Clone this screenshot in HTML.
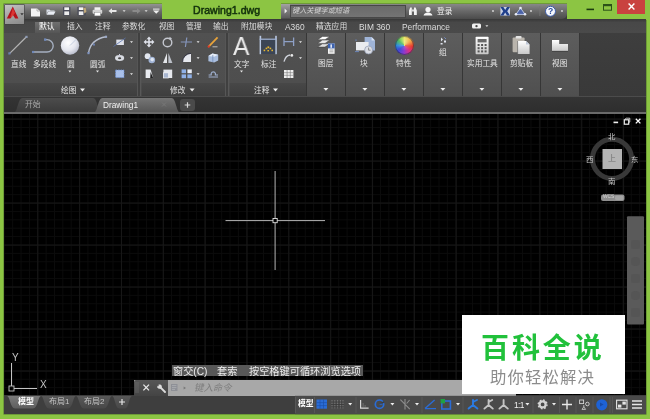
<!DOCTYPE html>
<html lang="zh">
<head>
<meta charset="utf-8">
<title>Drawing1.dwg</title>
<style>
html,body{margin:0;padding:0;background:#8cc543;overflow:hidden;}
body{width:650px;height:419px;position:relative;font-family:"Liberation Sans","Noto Sans CJK SC",sans-serif;}
.a{position:absolute;}
.t{position:absolute;white-space:nowrap;line-height:1;will-change:transform;}
#win{left:4px;top:4px;width:641.7px;height:410px;background:#3b3b3b;box-shadow:0 0 0 0.6px rgba(60,80,40,0.6);}
/* title */
#qat{left:4px;top:4px;width:157.5px;height:16px;background:linear-gradient(#939393,#6a6a6a 45%,#464646);border-radius:0 0 3px 0;}
#abtn{z-index:2;left:5px;top:5px;width:19.2px;height:19px;background:linear-gradient(160deg,#c4c4c4,#a4a4a4 50%,#8a8a8a);box-shadow:0 0 0 0.6px #444;}
#titlegreen{left:161.5px;top:0;width:119.5px;height:19.5px;background:#8cc543;}
#title{left:192.5px;top:5px;font-size:10.5px;color:#12300c;-webkit-text-stroke:0.5px #12300c;letter-spacing:0.05px;}
#info{left:281px;top:4px;width:286px;height:15.4px;background:linear-gradient(#888,#676767 50%,#4b4b4b);border-radius:0 0 5px 0;}
#search{left:289.6px;top:4.6px;width:116px;height:13.2px;background:linear-gradient(#6a6a6a,#747474);border:1px solid #474747;box-sizing:border-box;}
#topright{left:567px;top:0;width:83px;height:19.5px;background:#8cc543;}
#closebtn{left:617px;top:0;width:28px;height:14px;background:#c9423f;}
/* ribbon tabs */
#tabrow{left:4px;top:19.4px;width:641.7px;height:13.6px;background:linear-gradient(#383838,#484848 25%,#4a4a4a);}
.rt{will-change:transform;position:absolute;top:23.4px;font-size:7.8px;color:#dcdcdc;white-space:nowrap;line-height:1;}
#acttab{left:34.5px;top:21.6px;width:25px;height:11.4px;background:linear-gradient(#707070,#555);}
/* ribbon */
#ribbon{left:4px;top:33px;width:641.7px;height:62.6px;background:linear-gradient(#515151,#4e4e4e 49.6px,#474747 50.4px,#3e3e3e);}
#ribtitle{left:579.5px;top:33px;width:66.5px;height:62.6px;background:linear-gradient(#3e3e3e,#393939);}
.sep{position:absolute;top:33px;width:2px;height:62.6px;background:#404040;box-shadow:-1px 0 0 #565656,1.4px 0 0 #585858;}
.pn{position:absolute;top:33px;width:38px;height:62.6px;background:linear-gradient(#5d5d5d,#545454 70%,#4f4f4f);}
.lb{will-change:transform;position:absolute;font-size:7.7px;color:#e4e4e4;white-space:nowrap;line-height:1;}
.ar{position:absolute;width:0;height:0;border-left:2.5px solid transparent;border-right:2.5px solid transparent;border-top:3px solid #e8e8e8;}
.ars{position:absolute;width:0;height:0;border-left:2px solid transparent;border-right:2px solid transparent;border-top:2.5px solid #e0e0e0;}
/* file tabs */
#ftabrow{left:4px;top:95.6px;width:641.7px;height:17.4px;background:linear-gradient(#5a5a5a,#343434 1.3px,#2d2d2d);}
/* drawing */
#draw{left:4px;top:113px;width:641.7px;height:282px;background-color:#000;
background-image:
linear-gradient(90deg,#171717 0,#171717 1px,transparent 1px),
linear-gradient(0deg,#171717 0,#171717 1px,transparent 1px),
linear-gradient(90deg,#0b0b0b 0,#0b0b0b 1px,transparent 1px),
linear-gradient(0deg,#0b0b0b 0,#0b0b0b 1px,transparent 1px);
background-size:41.85px 42px,41.85px 42px,8.37px 8.4px,8.37px 8.4px;
background-position:33.3px 0,0 6.6px,33.3px 0,0 6.6px;}
/* bottom */
#bot{left:4px;top:395.6px;width:641.7px;height:18.6px;background:#3e3e3e;}
</style>
</head>
<body>
<div class="a" id="win"></div>

<!-- title bar -->
<div class="a" id="titlegreen"></div>
<div class="a" id="topright"></div>
<div class="a" id="qat"></div>
<div class="a" id="abtn"></div>
<div class="t" id="title">Drawing1.dwg</div>
<div class="a" id="info"></div>
<div class="a" style="left:281.4px;top:4.4px;width:8.2px;height:13.6px;background:linear-gradient(#a4a4a4,#7c7c7c 50%,#5c5c5c);"></div>
<div class="a" id="search"></div>
<div class="t" style="left:292px;top:7.6px;font-size:7.15px;color:#d4d4d4;font-style:italic;">键入关键字或短语</div>
<div class="t" style="left:437px;top:7.6px;font-size:7.7px;color:#f0f0f0;">登录</div>
<div class="a" id="closebtn"></div>

<!-- ribbon tab row -->
<div class="a" id="tabrow"></div>
<div class="a" id="acttab"></div>
<div class="rt" style="left:39px;color:#fff;">默认</div>
<div class="rt" style="left:67px;">插入</div>
<div class="rt" style="left:94.7px;">注释</div>
<div class="rt" style="left:122px;">参数化</div>
<div class="rt" style="left:159px;">视图</div>
<div class="rt" style="left:186px;">管理</div>
<div class="rt" style="left:213px;">输出</div>
<div class="rt" style="left:241px;">附加模块</div>
<div class="rt" style="left:285px;font-size:8.4px;top:22.6px;">A360</div>
<div class="rt" style="left:316px;">精选应用</div>
<div class="rt" style="left:359px;font-size:8.4px;top:22.6px;">BIM 360</div>
<div class="rt" style="left:402px;font-size:8.4px;top:22.6px;">Performance</div>

<!-- ribbon -->
<div class="a" id="ribbon"></div>
<div class="a" id="ribtitle"></div>
<div class="sep" style="left:137.6px;"></div>
<div class="sep" style="left:226px;"></div>

<div class="a" style="left:305.6px;top:33px;width:274px;height:62.6px;background:#363636;"></div>
<div class="pn" style="left:307px;"></div>
<div class="pn" style="left:346px;"></div>
<div class="pn" style="left:385px;"></div>
<div class="pn" style="left:424px;"></div>
<div class="pn" style="left:463px;"></div>
<div class="pn" style="left:502px;"></div>
<div class="pn" style="left:541px;"></div>

<div class="a" style="left:394.5px;top:35.5px;width:19px;height:19px;border-radius:50%;background:conic-gradient(from 0deg,#e8e04a 0deg,#f0a030 50deg,#e83a2a 95deg,#d8308a 140deg,#8a3ad0 185deg,#3a4ad8 235deg,#2a8ad8 270deg,#3ab04a 310deg,#a8d83a 345deg,#e8e04a 360deg);box-shadow:inset 0 0 0 1px rgba(40,40,60,0.55);"></div>
<div class="a" style="left:394.5px;top:35.5px;width:19px;height:19px;border-radius:50%;background:radial-gradient(circle at 50% 30%,rgba(255,255,255,0.35),rgba(255,255,255,0) 55%);"></div>
<div class="lb" style="left:10.9px;top:60.8px;">直线</div>
<div class="lb" style="left:32.9px;top:60.8px;">多段线</div>
<div class="lb" style="left:66.9px;top:60.8px;">圆</div>
<div class="lb" style="left:89.9px;top:60.8px;">圆弧</div>
<div class="lb" style="left:60.5px;top:87.3px;">绘图</div>
<div class="lb" style="left:170.2px;top:87.3px;">修改</div>
<div class="lb" style="left:253.6px;top:87.3px;">注释</div>
<div class="t" style="left:233.2px;top:33.5px;font-size:25.6px;color:#ececec;transform:scaleX(0.96);transform-origin:0 0;">A</div>
<div class="lb" style="left:233.8px;top:60.8px;">文字</div>
<div class="lb" style="left:260.8px;top:60.8px;">标注</div>
<div class="lb" style="left:317.9px;top:59.8px;">图层</div>
<div class="lb" style="left:360px;top:59.8px;">块</div>
<div class="lb" style="left:395.9px;top:59.8px;">特性</div>
<div class="lb" style="left:438.7px;top:49px;">组</div>
<div class="lb" style="left:466.5px;top:59.8px;">实用工具</div>
<div class="lb" style="left:510px;top:59.8px;">剪贴板</div>
<div class="lb" style="left:551.9px;top:59.8px;">视图</div>


<svg class="a" id="ico" style="left:0;top:0;z-index:3;" width="650" height="419" viewBox="0 0 650 419">
<defs>
<radialGradient id="gball" cx="0.4" cy="0.35" r="0.7"><stop offset="0" stop-color="#ffffff"/><stop offset="0.6" stop-color="#e4e6ee"/><stop offset="1" stop-color="#b4b8c8"/></radialGradient>
<linearGradient id="gwh" x1="0" y1="0" x2="0" y2="1"><stop offset="0" stop-color="#ffffff"/><stop offset="1" stop-color="#c8c8c8"/></linearGradient>
</defs>
<!-- A logo -->
<path d="M12.8 6.6 L18.4 18.6 L15.2 18.6 L12.8 14.8 L10.4 18.6 L6.8 18.6 Z" fill="#b4121a"/>
<path d="M12.8 8 L15 13 L11.6 17.6 L10.4 17 Z" fill="#e8403c" opacity="0.75"/>
<path d="M20.3 13.2 h3.4 l-1.7 2 z" fill="#333"/>
<!-- QAT icons -->
<path d="M31 8.5 h6 l3 2.5 v5.5 h-9 z" fill="#f4f4f4"/>
<path d="M37 8.5 v2.5 h3" fill="none" stroke="#999" stroke-width="0.7"/>
<path d="M46.5 9.5 h3 l1 1 h4 v1 h-6.5 l-1.5 3 z" fill="#d8dde6"/>
<path d="M48.5 11.6 h7 l-1.8 3.2 h-7.2 z" fill="#e9edf4"/>
<rect x="63" y="6.8" width="7.4" height="8.6" rx="0.6" fill="#4a4c58"/>
<rect x="64.3" y="7.3" width="4.8" height="2.7" fill="#f4f4f4"/>
<rect x="64.3" y="11.4" width="4.8" height="3.6" fill="#ececec"/>
<rect x="77.4" y="6.8" width="8.4" height="8.6" rx="0.6" fill="#4a4c58"/>
<rect x="78.8" y="7.3" width="4.6" height="2.7" fill="#f4f4f4"/>
<rect x="78.8" y="11.4" width="4.6" height="3.6" fill="#ececec"/>
<path d="M83.2 8 l2.4 -0.8 l0.8 4.6 l-2 1.8 z" fill="#c0a878"/>
<rect x="94.5" y="7.3" width="6" height="3" fill="#f2f2f2"/>
<rect x="92.6" y="9.8" width="9.6" height="4" rx="1" fill="#d5d5d5"/>
<rect x="94.5" y="12.3" width="6" height="3.6" fill="#ffffff" stroke="#777" stroke-width="0.4"/>
<path d="M108.5 11 l3.5 -2.8 v1.8 h4.5 v2 h-4.5 v1.8 z" fill="#e6e6e6"/>
<path d="M122.6 10.3 h3 l-1.5 1.8 z" fill="#ddd"/>
<path d="M140.5 11 l-3.5 -2.8 v1.8 h-4.5 v2 h4.5 v1.8 z" fill="#8a8a8a"/>
<path d="M144.6 10.3 h3 l-1.5 1.8 z" fill="#ddd"/>
<rect x="153" y="8.6" width="6.5" height="1" fill="#eee"/>
<path d="M153 10.6 h6.5 l-3.25 3.2 z" fill="#eee"/>
<!-- info center -->
<path d="M284.6 8.6 l2.6 2.4 l-2.6 2.4 z" fill="#eee"/>
<path d="M409 15 v-4.5 l1.2 -3 h1.6 v7.5 z M416.8 15 v-4.5 l-1.2 -3 h-1.6 v7.5 z" fill="#f2f2f2"/>
<rect x="411.5" y="9.5" width="2.6" height="2" fill="#ddd"/>
<circle cx="428" cy="9.6" r="2.6" fill="#f4f4f4"/>
<path d="M423.6 15.6 q0.4 -3 4.4 -3.2 q4 0.2 4.4 3.2 z" fill="#f4f4f4"/>
<circle cx="493" cy="11" r="0.9" fill="#ddd"/>
<rect x="500.4" y="7" width="9.6" height="8.6" fill="#c8d0e4"/><path d="M500.4 7 h3 l1.8 3 l1.8 -3 h3 l-2.8 4.3 l2.8 4.3 h-3 l-1.8 -3 l-1.8 3 h-3 l2.8 -4.3 z" fill="#1f3f8c"/>
<path d="M520.5 8 l4.6 6.4 h-9.2 z" fill="#4a62a8" stroke="#b8c4e4" stroke-width="1"/>
<circle cx="520.5" cy="8" r="1.3" fill="#e8ecf8"/><circle cx="516" cy="14.2" r="1.3" fill="#e8ecf8"/><circle cx="525" cy="14.2" r="1.3" fill="#e8ecf8"/>
<circle cx="531" cy="11" r="0.9" fill="#ddd"/>
<rect x="539.5" y="6" width="0.8" height="10" fill="#777"/>
<circle cx="550.5" cy="11.3" r="5" fill="#f4f6fb" stroke="#3a5aa8" stroke-width="1"/>
<circle cx="562" cy="11" r="0.9" fill="#ddd"/>
<text x="550.5" y="14.4" font-family="Liberation Sans, sans-serif" font-size="8.6" font-weight="bold" fill="#2a4a9c" text-anchor="middle">?</text>
<!-- window buttons -->
<rect x="586.5" y="8.6" width="7.5" height="1.6" fill="#1d3c10"/>
<rect x="603.5" y="4.6" width="8" height="5.6" fill="none" stroke="#2c5218" stroke-width="1"/>
<rect x="603" y="4" width="9" height="2.2" fill="#2c5218"/>
<path d="M628.6 3.6 l5.8 5.8 M634.4 3.6 l-5.8 5.8" stroke="#fff" stroke-width="1.4"/>
<!-- ribbon tab extra -->
<rect x="472" y="23.6" width="9" height="5" rx="1.5" fill="#f0f0f0"/>
<circle cx="476.5" cy="26.1" r="1.2" fill="#444"/>
<path d="M485.4 25.2 h3 l-1.5 1.8 z" fill="#ddd"/>

<!-- DRAW panel -->
<path d="M9.5 53.6 L26.5 36.8" stroke="#b4b4b4" stroke-width="1.2"/>
<rect x="8.3" y="52.3" width="2.2" height="2.2" fill="#6c7fb0"/><rect x="25.4" y="35.8" width="2.2" height="2.2" fill="#8d9ab5"/>
<path d="M33 52 H47 A6.2 6.2 0 0 0 47 39.6 H45" fill="none" stroke="#a5afc0" stroke-width="1.4"/>
<rect x="44" y="38.4" width="2.4" height="2.4" fill="#6f88b8"/><rect x="32" y="50.9" width="2.2" height="2.2" fill="#6f88b8"/>
<circle cx="70" cy="45.5" r="9.2" fill="url(#gball)"/>
<path d="M70 45.5 L76 39.5" stroke="#b8c4d8" stroke-width="0.8"/>
<path d="M88.5 53 Q90.5 39.5 106 36.8" fill="none" stroke="#b6bdcc" stroke-width="1.4"/>
<rect x="87.4" y="52" width="2.2" height="2.2" fill="#7f93c0"/><rect x="104.9" y="35.7" width="2.2" height="2.2" fill="#9aa8c8"/><rect x="93" y="43.6" width="2" height="2" fill="#6b7fae"/>
<rect x="116.3" y="39.6" width="7.6" height="5.4" fill="#dfe2ea"/>
<path d="M113.5 46.5 L125.5 38" stroke="#5b73ad" stroke-width="0.8"/>
<ellipse cx="119.6" cy="58" rx="4.6" ry="2.9" fill="#d8dbe2"/>
<ellipse cx="119.6" cy="58.3" rx="1.6" ry="1" fill="#444"/>
<rect x="119" y="54" width="1" height="3" fill="#ccd"/>
<rect x="115.6" y="70" width="8.4" height="7.6" fill="#a9c0ea"/>
<rect x="115.6" y="70" width="8.4" height="7.6" fill="none" stroke="#6f92d6" stroke-width="0.8" stroke-dasharray="1.5 1"/>
<path d="M130 41.2 h3 l-1.5 1.8 z M130 57.2 h3 l-1.5 1.8 z M130 73.2 h3 l-1.5 1.8 z" fill="#e6e6e6"/>
<path d="M68.4 70.6 h3 l-1.5 1.8 z M96 70.6 h3 l-1.5 1.8 z" fill="#e6e6e6"/>
<path d="M80 88.6 h5 l-2.5 3 z" fill="#eee"/>

<!-- MODIFY panel -->
<g fill="#dfe2ea">
<path d="M149 36.6 l2.4 2.6 h-4.8 z M149 47.4 l2.4 -2.6 h-4.8 z M143.6 42 l2.6 -2.4 v4.8 z M154.4 42 l-2.6 -2.4 v4.8 z"/>
<rect x="148.2" y="38.5" width="1.6" height="7"/><rect x="145.5" y="41.2" width="7" height="1.6"/>
</g>
<circle cx="167.5" cy="42.5" r="4.3" fill="none" stroke="#c4c7cf" stroke-width="1.4"/>
<path d="M169.5 36.8 l2.6 1.8 l-2.8 1.2 z" fill="#c4c7cf"/>
<path d="M180.8 42 H192 M186.8 37.5 L185.4 47" stroke="#8595bb" stroke-width="1.2" fill="none"/>
<path d="M196.6 41.2 h3 l-1.5 1.8 z M196.6 57.2 h3 l-1.5 1.8 z M196.6 73.2 h3 l-1.5 1.8 z" fill="#e6e6e6"/>
<path d="M208.4 46.8 L217.6 37.4" stroke="#e8a33a" stroke-width="1.8"/>
<path d="M208 47.3 l1.6 -1.7" stroke="#d83a2a" stroke-width="1.8"/>
<path d="M212.5 46.8 h5" stroke="#c8c8c8" stroke-width="0.9"/>
<circle cx="147.6" cy="56.2" r="2.9" fill="#e2e6ee"/><circle cx="151.8" cy="60" r="3.3" fill="#9fb2d4"/><circle cx="152.2" cy="59.6" r="1.8" fill="#dfe6f2"/>
<path d="M167 53 v10 h-4 z" fill="#e4e6ea"/><path d="M168.4 53 v10 h4 z" fill="#bcc0c8"/>
<path d="M191 62 h-8.4 a8.4 8.4 0 0 1 8.4 -8.6 z" fill="#e6e8ee"/>
<path d="M182.6 62 a8.4 8.4 0 0 1 8.4 -8.6" fill="none" stroke="#223" stroke-width="0.8"/>
<path d="M208.4 56 l4 -2.4 l5.8 1.2 v5.6 l-4 2 l-5.8 -1.2 z" fill="#a9bedf"/>
<path d="M208.4 56 l4 -2.4 l5.8 1.2 l-4 2 z" fill="#e8eef8"/>
<path d="M212.8 55 v7" stroke="#6d86b4" stroke-width="0.7"/>
<path d="M145.6 69.4 h5 l2.6 8.6 h-7.6 z" fill="#e9ebf0"/><path d="M150.6 72 l2.6 6 h-3 z" fill="#222"/>
<rect x="163.4" y="69.6" width="8.8" height="8.4" fill="#e6e8ee"/><rect x="163.4" y="72.8" width="5.2" height="5.2" fill="#a8b6d0" stroke="#f4f4f4" stroke-width="0.7"/>
<rect x="181.6" y="69.4" width="4.4" height="3.8" fill="#8fb0e6"/><rect x="187.4" y="69.4" width="4.4" height="3.8" fill="#e8ecf4"/><rect x="181.6" y="74.4" width="4.4" height="3.8" fill="#8fb0e6"/><rect x="187.4" y="74.4" width="4.4" height="3.8" fill="#8fb0e6"/>
<path d="M208.6 77 h9.4 M208.6 75 h2.6 v-1.6 a2.2 2.2 0 0 1 4.2 0 v1.6 h2.6" fill="none" stroke="#9fb0cf" stroke-width="1.2"/>
<path d="M189.6 88.6 h5 l-2.5 3 z" fill="#eee"/>

<!-- ANNOTATE -->
<rect x="259.6" y="35.8" width="1.6" height="18.4" fill="#b9c8e2"/><rect x="275.2" y="35.8" width="1.6" height="18.4" fill="#b9c8e2"/>
<rect x="261.2" y="40" width="14" height="14" fill="#3b4555"/>
<rect x="259.6" y="38.6" width="17" height="1.2" fill="#9fb2d6"/>
<g fill="#e6b52e"><rect x="263.6" y="49.6" width="1.6" height="1.6"/><rect x="265.6" y="47.6" width="1.6" height="1.6"/><rect x="267.4" y="46.4" width="1.8" height="1.8"/><rect x="269.6" y="47.6" width="1.6" height="1.6"/><rect x="271.4" y="49.6" width="1.6" height="1.6"/><rect x="267.4" y="50" width="1.6" height="1.4"/></g>
<path d="M284 37.6 v8.4 M293.6 37.6 v8.4 M284 41.6 h9.6" stroke="#8ea0c6" stroke-width="1.3" fill="none"/>
<path d="M284 61.6 Q285.6 55.6 290 55" stroke="#d0d4dc" stroke-width="1.3" fill="none"/><circle cx="291.8" cy="55.4" r="1.4" fill="#e8e8e8"/>
<rect x="284" y="70" width="9.4" height="8" fill="#f0f0f0"/>
<path d="M287.1 70 v8 M290.3 70 v8 M284 72.7 h9.4 M284 75.3 h9.4" stroke="#777" stroke-width="0.6"/>
<path d="M299 41.2 h3 l-1.5 1.8 z M299 57.2 h3 l-1.5 1.8 z" fill="#e6e6e6"/>
<path d="M240 70.6 h3 l-1.5 1.8 z" fill="#e6e6e6"/>
<path d="M273 88.6 h5 l-2.5 3 z" fill="#eee"/>

<!-- big panels -->
<g>
<path d="M322.4 36.4 h7.4 l-4.8 3.3 h-7.4 z" fill="#fbfbfb" stroke="#3c3c3c" stroke-width="0.5"/>
<path d="M322.4 40.1 h7.4 l-4.8 3.3 h-7.4 z" fill="#ededed" stroke="#3c3c3c" stroke-width="0.5"/>
<path d="M322.4 43.8 h7.4 l-4.8 3.3 h-7.4 z" fill="#e0e0e0" stroke="#3c3c3c" stroke-width="0.5"/>
<rect x="328" y="43.4" width="6.6" height="10.4" fill="#f4f4f4"/>
<rect x="328" y="43.4" width="6.6" height="5" fill="#3d63b0"/>
<rect x="330.4" y="44.4" width="1.6" height="3.4" fill="#dfe6f4"/>
<path d="M329.4 50 h4 M329.4 51.8 h4" stroke="#777" stroke-width="0.6"/>
</g>
<g>
<path d="M364.6 37 h7 l3.4 3.4 v10 h-10.4 z" fill="#9fb4d8"/>
<path d="M371.6 37 v3.4 h3.4" fill="#d8e2f2"/>
<rect x="356" y="42" width="12.6" height="8.4" fill="#e9ebef"/>
<path d="M355 51.6 h4 M356 41 v-1.6" stroke="#6f8fd0" stroke-width="0.8"/>
<circle cx="368.6" cy="50" r="4" fill="#dcdfe6" stroke="#8f9ab0" stroke-width="0.7"/>
<path d="M368.6 47.6 v2.6 h2" stroke="#666" stroke-width="0.7" fill="none"/>
</g>
<path d="M441 37.6 l2 2 l-2 2 z M444 40.4 h2 v2 h-2 z M440.6 43 h2 v1.6 h-2 z" fill="#e0e4ee"/>
<path d="M444.4 37.4 l1.6 1.6" stroke="#7f9be0" stroke-width="0.8"/>
<g>
<rect x="475.6" y="36.8" width="13" height="17.4" rx="0.8" fill="url(#gwh)"/>
<rect x="477.6" y="39" width="9" height="3.4" fill="#6a6a6a"/>
<g fill="#555"><rect x="477.6" y="44" width="2" height="2"/><rect x="481.1" y="44" width="2" height="2"/><rect x="484.6" y="44" width="2" height="2"/><rect x="477.6" y="47.2" width="2" height="2"/><rect x="481.1" y="47.2" width="2" height="2"/><rect x="484.6" y="47.2" width="2" height="2"/><rect x="477.6" y="50.4" width="2" height="2"/><rect x="481.1" y="50.4" width="2" height="2"/><rect x="484.6" y="50.4" width="2" height="2"/></g>
</g>
<g>
<rect x="512.6" y="37.6" width="12" height="14.6" rx="1" fill="#b9b4ac"/>
<rect x="515.6" y="36" width="6" height="2.6" rx="1" fill="#e4e4e4"/>
<path d="M517.6 41 h8.4 l3.6 3.4 v9.6 h-12 z" fill="url(#gwh)"/>
<path d="M526 41 v3.4 h3.6" fill="#bfc8d8"/>
<path d="M517.6 41 v13" stroke="#555" stroke-width="0.6"/>
</g>
<path d="M552 40 h7.2 v4 h8.8 v7 h-16 z" fill="url(#gwh)"/>
<path d="M552 51.3 h16" stroke="#333" stroke-width="0.6"/>
<g fill="#eee">
<path d="M323.4 88 h5 l-2.5 2.8 z"/><path d="M362.4 88 h5 l-2.5 2.8 z"/><path d="M401.4 88 h5 l-2.5 2.8 z"/><path d="M440.4 88 h5 l-2.5 2.8 z"/><path d="M479.4 88 h5 l-2.5 2.8 z"/><path d="M518.4 88 h5 l-2.5 2.8 z"/><path d="M557.4 88 h5 l-2.5 2.8 z"/>
</g>
</svg>


<!-- file tabs -->
<div class="a" id="ftabrow"></div>
<div class="a" style="left:4px;top:112.2px;width:641.7px;height:1.6px;background:#6a6a6a;z-index:2;"></div>
<svg class="a" style="left:0;top:0;" width="650" height="419" viewBox="0 0 650 419">
<defs>
<linearGradient id="gt1" x1="0" y1="0" x2="0" y2="1"><stop offset="0" stop-color="#4c4c4c"/><stop offset="1" stop-color="#3a3a3a"/></linearGradient>
<linearGradient id="gt2" x1="0" y1="0" x2="0" y2="1"><stop offset="0" stop-color="#767676"/><stop offset="1" stop-color="#555555"/></linearGradient>
</defs>
<path d="M14 112.5 C17.5 112.5 18 98 22.5 98 H93 C97.5 98 98 112.5 101 112.5 Z" fill="url(#gt1)"/>
<path d="M94 112.5 C97.5 112.5 98 98 102.5 98 H171.5 C176 98 176.5 112.5 180 112.5 Z" fill="url(#gt2)"/>
<rect x="180" y="99" width="15" height="12" rx="3" fill="#4a4a4a"/>
<path d="M184.7 105 h5.6 M187.5 102.2 v5.6" stroke="#d8d8d8" stroke-width="1.2"/>
<path d="M162 102.5 l4 4 M166 102.5 l-4 4" stroke="#777" stroke-width="1"/>
</svg>
<div class="t" style="left:24.6px;top:101.4px;font-size:7.8px;color:#a8a8a8;">开始</div>
<div class="t" style="left:103.3px;top:101.2px;font-size:8.3px;color:#f2f2f2;">Drawing1</div>

<!-- drawing area -->
<div class="a" id="draw"></div>
<svg class="a" style="left:0;top:0;" width="650" height="419" viewBox="0 0 650 419">
<!-- crosshair -->
<path d="M225.5 220.6 H273 M277 220.6 H325 M275.1 171 V218.6 M275.1 222.6 V270" stroke="#b4b4b4" stroke-width="1"/>
<rect x="273" y="218.5" width="4.2" height="4.2" fill="#000" stroke="#e4e4e4" stroke-width="0.9"/>
<!-- ucs -->
<path d="M11.5 386 V363 M14 388.5 H37" stroke="#c4c4c4" stroke-width="1"/>
<rect x="9" y="386" width="5" height="5" fill="none" stroke="#c4c4c4" stroke-width="0.9"/>
<!-- viewcube -->
<circle cx="612" cy="158.8" r="19.6" fill="none" stroke="#383838" stroke-width="5"/>
<rect x="602.5" y="149" width="19.5" height="20" fill="#b4b4b4"/>
<rect x="601" y="194.5" width="23.5" height="6.6" rx="2" fill="#8e8e8e"/>
<rect x="615" y="195.5" width="8.5" height="4.6" rx="1.5" fill="#a4a4a4"/>
<!-- doc window controls -->
<rect x="613.5" y="121.6" width="4.6" height="1.6" fill="#eee"/>
<rect x="624.3" y="119.8" width="4.4" height="4.4" fill="none" stroke="#eee" stroke-width="1.2"/>
<path d="M624.8 119.4 l1.4 -1.2 h3.6 v3.8 l-1.2 1" stroke="#eee" stroke-width="0.8" fill="none"/>
<path d="M635.8 118.8 l4.6 4.6 M640.4 118.8 l-4.6 4.6" stroke="#fff" stroke-width="1.3"/>
<!-- nav bar -->
<rect x="627" y="216.2" width="17" height="108.4" rx="1" fill="#5a5a5a"/><g fill="#555555"><rect x="631" y="240" width="9" height="9" rx="2"/><rect x="631" y="257" width="9" height="9" rx="4"/><rect x="631" y="274" width="9" height="9" rx="2"/><rect x="631" y="291" width="9" height="9" rx="4"/><rect x="631" y="308" width="9" height="9" rx="2"/></g>
</svg>
<div class="t" style="left:11.9px;top:352.6px;font-size:10px;color:#c4c4c4;">Y</div>
<div class="t" style="left:40.1px;top:379.6px;font-size:10px;color:#c4c4c4;">X</div>
<div class="t" style="left:608.2px;top:132.6px;font-size:7.4px;color:#c8c8c8;">北</div>
<div class="t" style="left:608.2px;top:177.6px;font-size:7.4px;color:#c8c8c8;">南</div>
<div class="t" style="left:586.4px;top:156px;font-size:7.4px;color:#c8c8c8;">西</div>
<div class="t" style="left:631.2px;top:155.8px;font-size:7.4px;color:#c8c8c8;">东</div>
<div class="t" style="left:608.2px;top:154.6px;font-size:8px;color:#707070;">上</div>
<div class="t" style="left:603px;top:195.4px;font-size:4.8px;color:#d4d4d4;">WCS</div>

<!-- command line -->
<div class="a" style="left:172px;top:364.7px;width:190.7px;height:11.8px;background:#585858;"></div>
<div class="t" style="left:172.8px;top:366.6px;font-size:10.2px;color:#ececec;">窗交(C)</div>
<div class="t" style="left:216.6px;top:366.6px;font-size:10.2px;color:#ececec;">套索</div>
<div class="t" style="left:248.5px;top:366.6px;font-size:10.2px;color:#ececec;">按空格键可循环浏览选项</div>
<div class="a" style="left:133.6px;top:379.5px;width:382.4px;height:16.3px;background:#a8a8a8;"></div>
<div class="a" style="left:133.6px;top:379.5px;width:34.4px;height:16.3px;background:linear-gradient(#565656,#444);border-radius:2px 0 0 0;"></div>
<svg class="a" style="left:0;top:0;" width="650" height="419" viewBox="0 0 650 419">
<path d="M136 382.5 v10.5 M138 382.5 v10.5" stroke="#8a8a8a" stroke-width="0.8" stroke-dasharray="1 1"/>
<path d="M143.4 384.6 l5.6 5.8 M149 384.6 l-5.6 5.8" stroke="#e8e8e8" stroke-width="1.3"/>
<path d="M160.4 387.4 L165 392" stroke="#dcdcdc" stroke-width="1.9" stroke-linecap="round"/><path d="M157.2 385.4 v2 l1.6 1.4 h2 l1 -1 v-2 l-1.4 -1.4 h-1.8 v1.6 l-0.8 0.6 z" fill="#dcdcdc"/>
<rect x="171" y="384" width="6.5" height="7" fill="#8e9096"/>
<path d="M172 385.6 h4.4 M172 387.6 h4.4 M172 389.4 h3" stroke="#b4b6ba" stroke-width="0.7"/>
<path d="M183.6 386.4 l2.4 1.5 l-2.4 1.5 z" fill="#777"/>
</svg>
<div class="t" style="left:194px;top:383px;font-size:9.4px;color:#7e7e7e;font-style:italic;">键入命令</div>

<!-- bottom -->
<div class="a" id="bot"></div>
<svg class="a" style="left:0;top:0;" width="650" height="419" viewBox="0 0 650 419">
<defs>
<linearGradient id="gb1" x1="0" y1="0" x2="0" y2="1"><stop offset="0" stop-color="#7a7a7a"/><stop offset="1" stop-color="#5e5e5e"/></linearGradient>
<linearGradient id="gb2" x1="0" y1="0" x2="0" y2="1"><stop offset="0" stop-color="#585858"/><stop offset="1" stop-color="#484848"/></linearGradient>
</defs>
<path d="M7 396 H41 C38 396 38 408.5 33 408.5 H15 C10 408.5 10 396 7 396 Z" fill="url(#gb1)"/>
<path d="M41 396 H76 C73 396 73 408.5 68 408.5 H49 C44 408.5 44 396 41 396 Z" fill="url(#gb2)"/>
<path d="M76 396 H112 C109 396 109 408.5 104 408.5 H84 C79 408.5 79 396 76 396 Z" fill="url(#gb2)"/>
<path d="M112 396 H132 C129 396 129 408.5 125 408.5 H119 C115 408.5 115 396 112 396 Z" fill="url(#gb2)"/>
<path d="M119 402 h6 M122 399 v6" stroke="#e4e4e4" stroke-width="1.2"/>
<!-- status bar -->
<rect x="295" y="395.8" width="351" height="18.4" fill="#4a4a4a"/>
<g stroke="#5a5a5a" stroke-width="0.8">
<path d="M295.5 397 v16 M314.5 397 v16 M356 397 v16 M422 397 v16 M463 397 v16 M533 397 v16 M559.5 397 v16 M576 397 v16 M593 397 v16 M610 397 v16 M612.4 397 v16"/>
</g>
<rect x="316.5" y="399.5" width="10.5" height="9.2" fill="#2a6cd6"/>
<path d="M320 399.5 v9.2 M323.5 399.5 v9.2 M316.5 402.6 h10.5 M316.5 405.6 h10.5" stroke="#1b4fa8" stroke-width="0.6"/>
<g fill="#777"><rect x="331.5" y="400" width="1" height="8.4"/><rect x="334.3" y="400" width="1" height="8.4"/><rect x="337.1" y="400" width="1" height="8.4"/><rect x="339.9" y="400" width="1" height="8.4"/><rect x="342.5" y="400" width="1" height="8.4"/></g>
<g fill="#3c3c3c"><rect x="331" y="401.6" width="13" height="0.9"/><rect x="331" y="404" width="13" height="0.9"/><rect x="331" y="406.4" width="13" height="0.9"/></g>
<path d="M360.6 400 v8.2 h8" stroke="#d8d8d8" stroke-width="1.2" fill="none"/>
<path d="M362.6 406 h1 M364.6 406 h1 M362.6 404 h1" stroke="#aaa" stroke-width="0.8"/>
<circle cx="379.5" cy="404.2" r="4.2" fill="none" stroke="#2a6cd6" stroke-width="1.7"/>
<path d="M379.5 404.2 l4.6 -2.4" stroke="#3c3c3c" stroke-width="1.4"/>
<path d="M379.5 404.2 h3" stroke="#2a6cd6" stroke-width="1"/>
<path d="M400.4 399.6 l9.4 9.6 M405 399 v10.6 M409.6 400 l-3 3.5" stroke="#8e8e8e" stroke-width="1.1" fill="none"/>
<path d="M425 408.6 h11 M425 408.6 l9.6 -8.6" stroke="#2a6cd6" stroke-width="1.4" fill="none"/>
<rect x="441.8" y="401" width="8.6" height="8" fill="none" stroke="#2a6cd6" stroke-width="1.6"/>
<rect x="440.6" y="399" width="4.4" height="4.4" fill="#1fa043"/>
<g fill="#eee">
<path d="M348.2 403 h4 l-2 2.6 z"/><path d="M390.4 403 h4 l-2 2.6 z"/><path d="M415 403 h4 l-2 2.6 z"/><path d="M456 403 h4 l-2 2.6 z"/><path d="M525.4 403 h4 l-2 2.6 z"/><path d="M552 403 h4 l-2 2.6 z"/>
</g>
<!-- annotation figs -->
<g fill="none" stroke-width="1.9" stroke-linecap="round">
<path d="M473 400 v5 l-4.4 3.6 M473 405 l4.4 3.6 M473 402 l4 -2" stroke="#2a7be4"/>
<path d="M488.6 400 v5 l-4.2 3.6 M488.6 405 l4.2 3.6 M488.6 402 l3.6 -2" stroke="#c4c4c4"/>
<path d="M503.6 400 v5 l-4.2 3.6 M503.6 405 l4.2 3.6" stroke="#c4c4c4"/>
</g>
<circle cx="542.6" cy="404.4" r="3" fill="none" stroke="#d4d4d4" stroke-width="2.2"/>
<circle cx="542.6" cy="404.4" r="4.4" fill="none" stroke="#d4d4d4" stroke-width="1.4" stroke-dasharray="1.7 1.75"/>
<path d="M562 404.5 h10 M567 399.5 v10" stroke="#e8e8e8" stroke-width="1.4"/>
<rect x="579.6" y="400" width="4" height="3.6" fill="none" stroke="#d4d4d4" stroke-width="0.9"/>
<circle cx="587.4" cy="404" r="1.8" fill="none" stroke="#d4d4d4" stroke-width="0.9"/>
<path d="M583.8 405 v2 M582 409.4 l1.8 -2.6 l1.8 2.6 z" stroke="#d4d4d4" stroke-width="0.8" fill="none"/>
<circle cx="601.8" cy="404.8" r="5.6" fill="#1e62d6"/>
<path d="M600 402.4 l3.6 2.1 l-3.6 2.1 z" fill="#174aa8"/>
<rect x="616.6" y="400.2" width="10.4" height="8.6" fill="none" stroke="#e4e4e4" stroke-width="1.1"/>
<rect x="618" y="404.6" width="3.4" height="3" fill="#e4e4e4"/><rect x="622.4" y="401.6" width="3.4" height="3" fill="#e4e4e4"/>
<path d="M632 401 h10 M632 404.5 h10 M632 408 h10" stroke="#e4e4e4" stroke-width="1.5"/>
</svg>
<div class="t" style="left:17.8px;top:398.4px;font-size:8px;color:#fff;font-weight:bold;">模型</div>
<div class="t" style="left:48.6px;top:398.4px;font-size:8px;color:#c4c4c4;">布局1</div>
<div class="t" style="left:83.8px;top:398.4px;font-size:8px;color:#c4c4c4;">布局2</div>
<div class="t" style="left:297.6px;top:399.6px;font-size:7.8px;color:#fff;font-weight:bold;">模型</div>
<div class="t" style="left:514px;top:400.6px;font-size:8.4px;color:#f0f0f0;letter-spacing:-0.6px;">1:1</div>

<!-- watermark -->
<div class="a" style="left:462px;top:314.5px;width:162.6px;height:79.6px;background:#fff;"></div>
<div class="t" style="left:480.6px;top:334.6px;font-size:28px;font-weight:bold;color:#21c13b;letter-spacing:2.9px;">百科全说</div>
<div class="t" style="left:490px;top:368.8px;font-size:16.4px;color:#8c8c8c;letter-spacing:1.1px;">助你轻松解决</div>

</body>
</html>
